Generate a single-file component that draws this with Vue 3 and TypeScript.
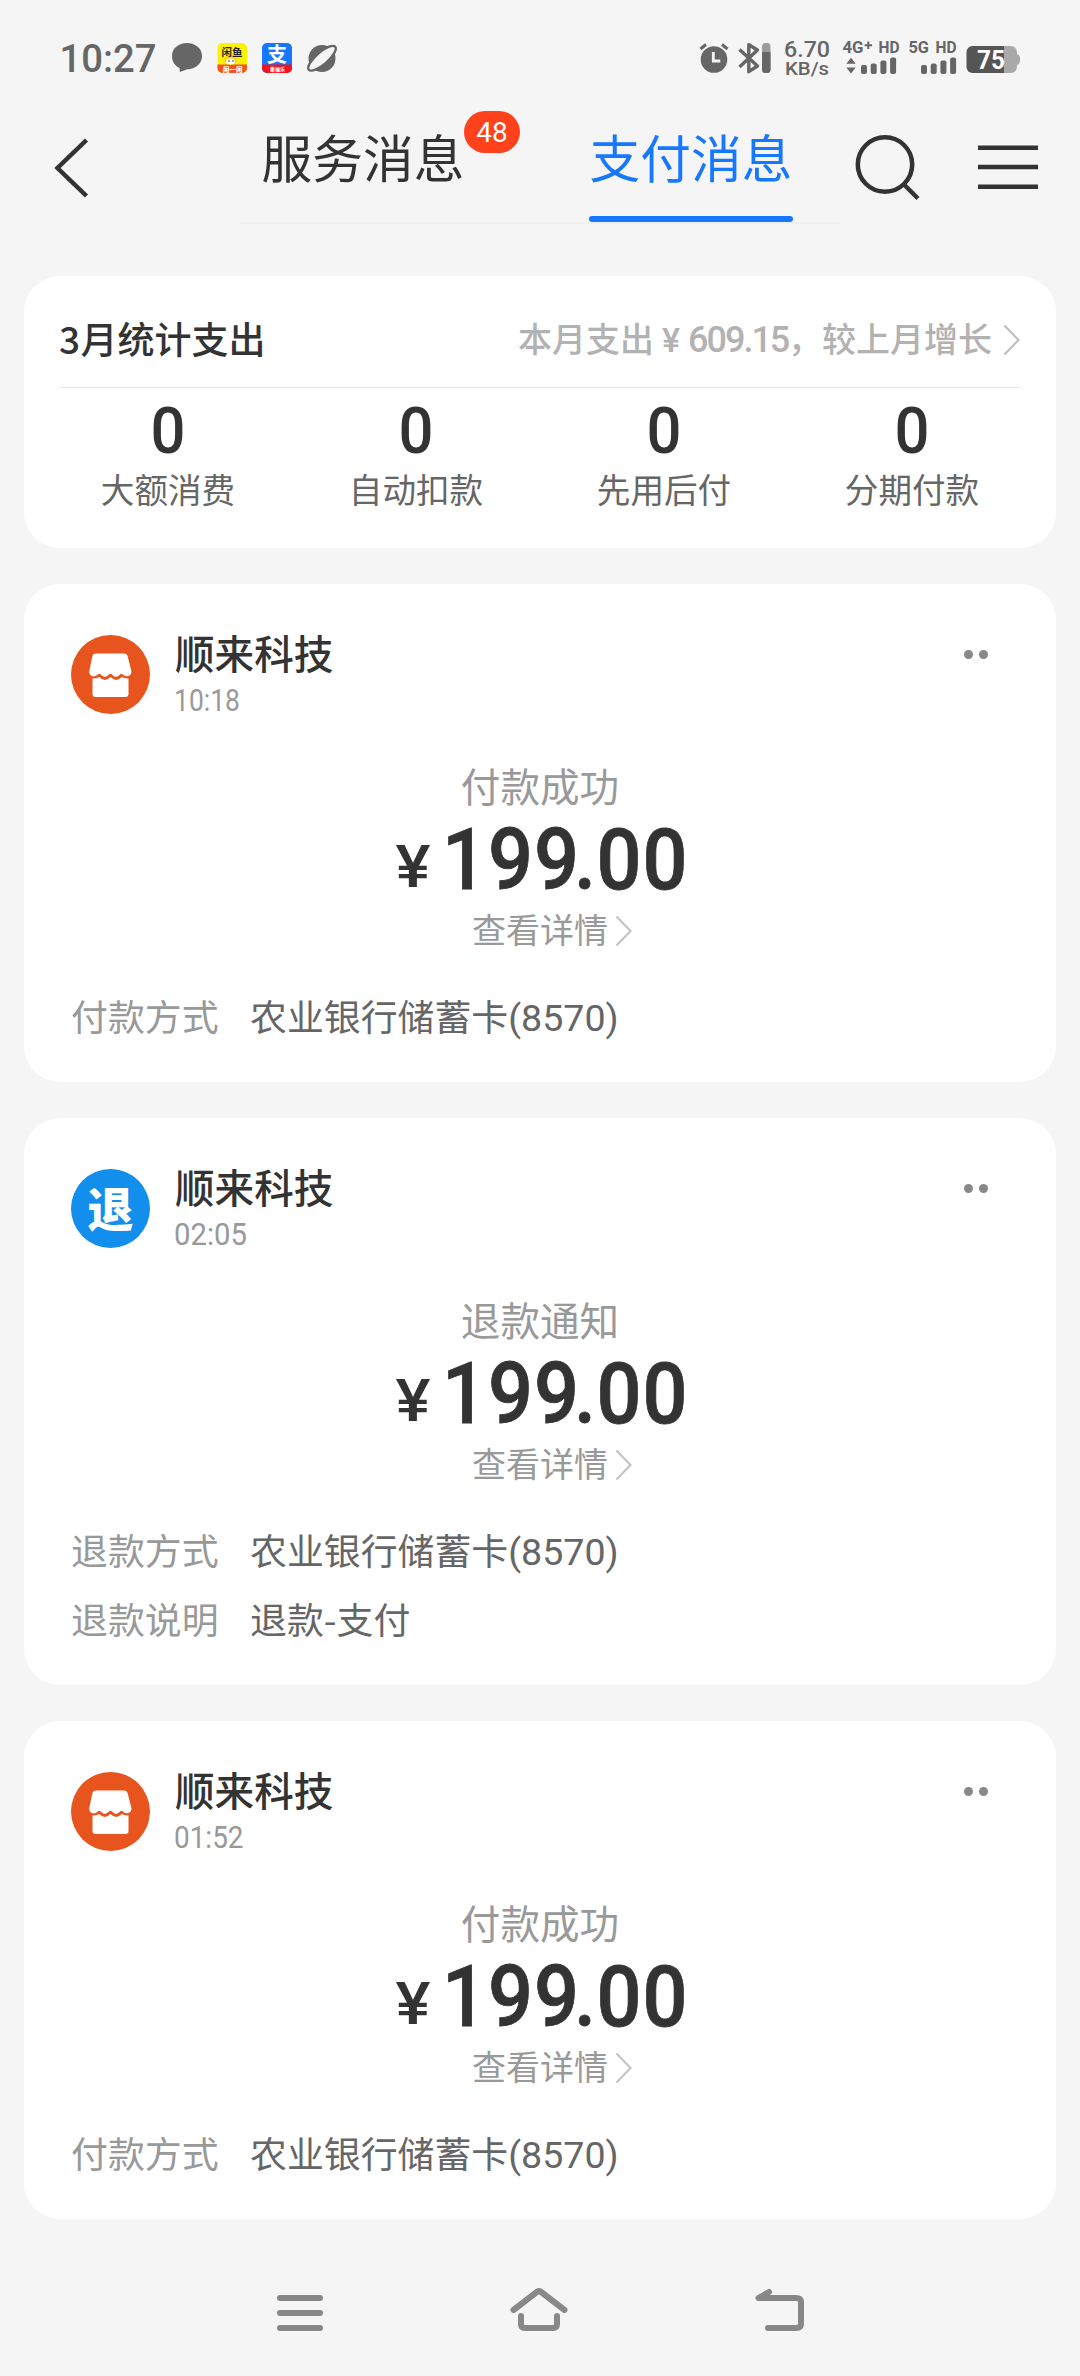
<script setup lang="ts">
interface Row {
  label: string
  value: string
  card?: string
}

interface Message {
  kind: 'pay' | 'refund'
  name: string
  time: string
  status: string
  rows: Row[]
}

const stats: string[] = ['大额消费', '自动扣款', '先用后付', '分期付款']

const messages: Message[] = [
  {
    kind: 'pay',
    name: '顺来科技',
    time: '10:18',
    status: '付款成功',
    rows: [{ label: '付款方式', value: '农业银行储蓄卡', card: '(8570)' }],
  },
  {
    kind: 'refund',
    name: '顺来科技',
    time: '02:05',
    status: '退款通知',
    rows: [
      { label: '退款方式', value: '农业银行储蓄卡', card: '(8570)' },
      { label: '退款说明', value: '退款-支付' },
    ],
  },
  {
    kind: 'pay',
    name: '顺来科技',
    time: '01:52',
    status: '付款成功',
    rows: [{ label: '付款方式', value: '农业银行储蓄卡', card: '(8570)' }],
  },
]

// The digit 1 is set narrower than the other figures.
const timeWidth = (time: string): number => 73 - 3.5 * (time.split('1').length - 1)
</script>

<template>
  <div class="screen">
    <div class="status-bar">
      <svg class="status-left" width="300" height="40" viewBox="40 38 300 40">
        <text x="59.5" y="71.5" class="clock" textLength="97" lengthAdjust="spacingAndGlyphs">10:27</text>
        <path d="M187 43c8.500 0 15 5.500 15 13s-6.500 13-14 13.200c-2 .1-4 1.600-8.200 2.800l-.2-4C175 66 172 61.500 172 56c0-7.500 6.500-13 15-13z" fill="#666" />
        <g>
          <rect x="217.500" y="43" width="29.500" height="30" rx="5" fill="#fdf100" />
          <path d="M217.500 64.500h29.500v3.500a5 5 0 0 1-5 5h-19.500a5 5 0 0 1-5-5z" fill="#f4511e" />
          <ellipse cx="230.500" cy="60" rx="6.500" ry="4.500" fill="#ffd21c" />
          <ellipse cx="230.500" cy="61.500" rx="4.500" ry="3" fill="#fff" />
          <circle cx="229" cy="61" r=".8" fill="#333" /><circle cx="233" cy="61" r=".8" fill="#333" />
          <text x="221.500" y="56" font-size="10.500" font-weight="700" fill="#222">闲鱼</text>
          <text x="223" y="71.500" font-size="6.500" font-weight="900" fill="#fff">闲一闲</text>
        </g>
        <g>
          <rect x="262" y="43" width="30" height="30" rx="5" fill="#1677ff" />
          <path d="M262 64.500h30v3.500a5 5 0 0 1-5 5h-20a5 5 0 0 1-5-5z" fill="#f0161e" />
          <text x="267" y="61.500" font-size="20" font-weight="700" fill="#fff">支</text>
          <text x="270" y="71" font-size="5" font-weight="700" fill="#fff">集福乐</text>
        </g>
        <g fill="none" stroke="#666">
          <circle cx="322" cy="58.500" r="13.500" fill="#666" stroke="none" />
          <ellipse cx="322" cy="58.300" rx="17.500" ry="6" transform="rotate(-41 322 58.300)" fill="#f5f5f5" stroke="#666" stroke-width="2.400" />
        </g>
      </svg>
      <svg class="status-right" width="330" height="40" viewBox="696 38 330 40">
        <g fill="#666">
          <circle cx="714" cy="59.500" r="13.300" />
          <path d="M700.500 49l5.500-4.500M727.500 49l-5.500-4.500" stroke="#666" stroke-width="3" />
          <path d="M713.300 52v9h7" fill="none" stroke="#f5f5f5" stroke-width="2.800" />
          <path d="M739.500 49.500l18 16.500-8.700 5.700V44.800l8.700 5.200-18 17" fill="none" stroke="#666" stroke-width="3.400" stroke-linejoin="round" />
          <rect x="762" y="43" width="8.500" height="30" rx="3.500" fill="#9b9b9b" />
          <path d="M762 52h8.500v17.500a3.500 3.500 0 0 1-3.500 3.500h-1.500a3.500 3.500 0 0 1-3.500-3.500z" />
          <text x="784" y="57" font-size="22.500" font-weight="500" textLength="46" lengthAdjust="spacingAndGlyphs" class="latin">6.70</text>
          <text x="785" y="75" font-size="19" font-weight="500" textLength="44" lengthAdjust="spacingAndGlyphs" class="latin">KB/s</text>
          <text x="842.500" y="53" font-size="16.500" font-weight="700" textLength="21" lengthAdjust="spacingAndGlyphs" class="latin">4G</text>
          <path d="M868.300 41.500v7.500M864.600 45.200h7.500" stroke="#666" stroke-width="2" />
          <text x="878.500" y="53" font-size="16.500" font-weight="700" textLength="21" lengthAdjust="spacingAndGlyphs" class="latin">HD</text>
          <path d="M851 57.700l4.700 6h-9.400zM851 73.600l4.700-6h-9.400z" />
          <g v-for="x in [861, 921]" :key="x">
            <rect :x="x" y="65" width="6" height="9" rx="2" />
            <rect :x="x + 9.700" y="63.500" width="6" height="10.500" rx="2" />
            <rect :x="x + 19.400" y="60.500" width="6" height="13.500" rx="2" />
            <rect :x="x + 29.100" y="57.500" width="6" height="16.500" rx="2" />
          </g>
          <text x="908.500" y="53" font-size="16.500" font-weight="700" textLength="20.500" lengthAdjust="spacingAndGlyphs" class="latin">5G</text>
          <text x="935.500" y="53" font-size="16.500" font-weight="700" textLength="21" lengthAdjust="spacingAndGlyphs" class="latin">HD</text>
          <path d="M1004 46h7a6 6 0 0 1 6 6v2a4 4 0 0 1 3 3.500v4a4 4 0 0 1-3 3.500v2a6 6 0 0 1-6 6h-7z" fill="#a9a9a9" />
          <path d="M972.500 46H1004v27h-31.500a6 6 0 0 1-6-6V52a6 6 0 0 1 6-6z" fill="#555" />
          <text x="977" y="68.800" font-size="25" font-weight="700" textLength="28" lengthAdjust="spacingAndGlyphs" class="latin" fill="#fff">75</text>
        </g>
      </svg>
    </div>

    <header class="header">
      <svg class="back" width="40" height="64" viewBox="52 136 40 64">
        <path d="M86.500 140L57.500 168l29 28" fill="none" stroke="#333" stroke-width="4.500" />
      </svg>
      <nav class="tabs">
        <div class="tab">服务消息<span class="badge">48</span></div>
        <div class="tab active">支付消息</div>
      </nav>
      <svg class="tools" width="190" height="70" viewBox="852 130 190 70" fill="none" stroke="#333">
        <circle cx="885" cy="164.500" r="27.200" stroke-width="4.500" />
        <path d="M903.500 184l14.500 14.500" stroke-width="4.500" />
        <path d="M978 147.700h60M978 167h60M978 186.700h60" stroke-width="4.500" />
      </svg>
    </header>

    <main class="list">
      <section class="card summary">
        <div class="summary-head">
          <h2><span class="three">3</span>月统计支出</h2>
          <div class="compare">
            本月支出<span class="yen">¥</span><span class="sum">609.15</span>，较上月增长
            <svg width="18" height="32" viewBox="0 0 18 32"><path d="M1.500 1.500L15.500 16l-14 14.500" fill="none" stroke="#c0c0c0" stroke-width="2.200" /></svg>
          </div>
        </div>
        <div class="stats">
          <div v-for="label in stats" :key="label" class="stat">
            <svg width="60" height="60" viewBox="0 0 60 60"><text x="12.500" y="52.500" class="zero" textLength="35" lengthAdjust="spacingAndGlyphs">0</text></svg>
            <span>{{ label }}</span>
          </div>
        </div>
      </section>

      <section v-for="(m, i) in messages" :key="i" class="card message">
        <div class="head">
          <div v-if="m.kind === 'pay'" class="avatar pay">
            <svg width="79" height="79" viewBox="0 0 79 79" fill="#fff">
              <path d="M25 18.500h28q3 0 3.700 3l3.700 14.500c.5 3-1.900 5.300-5 5.300-2.300 0-3-2.300-5-2.300s-2.700 2.800-5.500 2.800-3-2.800-5.400-2.800-3 2.800-5.700 2.800-3.200-2.800-5.500-2.800-2.700 2.300-5 2.300c-3.500 0-5.500-2.300-5-5.300L21.300 21.500q.7-3 3.700-3z" />
              <path d="M21.500 43.500q4.500 0 6.700-1.500 3 3 5.600 3t5.700-3q3 3 5.700 3t5.500-3q3 1.500 6.800 1.500V59q0 3-3 3h-30q-3 0-3-3z" />
            </svg>
          </div>
          <div v-else class="avatar refund">退</div>
          <div class="who">
            <div class="name">{{ m.name }}</div>
            <svg class="time" width="90" height="36" viewBox="0 0 90 36"><text x="-1" y="29" :textLength="timeWidth(m.time)" lengthAdjust="spacingAndGlyphs">{{ m.time }}</text></svg>
          </div>
          <div class="more"><i></i><i></i></div>
        </div>
        <div class="state">{{ m.status }}</div>
        <svg class="amount" width="300" height="76" viewBox="390 235 300 76">
          <text x="395.500" y="303.300" font-size="60" textLength="35" lengthAdjust="spacingAndGlyphs" class="amount-yen">¥</text>
          <text transform="translate(442 305) scale(.92 1)" x="0 50 100 143.500 168 218" y="0" font-size="86" class="amount-num">199.00</text>
        </svg>
        <div class="detail">
          查看详情
          <svg width="18" height="32" viewBox="0 0 18 32"><path d="M1.500 1.500L15.500 16l-14 14.500" fill="none" stroke="#c4c4c4" stroke-width="2.200" /></svg>
        </div>
        <dl class="rows">
          <div v-for="row in m.rows" :key="row.label" class="row">
            <dt>{{ row.label }}</dt>
            <dd>{{ row.value }}<span v-if="row.card" class="digits">{{ row.card }}</span></dd>
          </div>
        </dl>
      </section>
    </main>

    <footer class="nav">
      <svg width="46" height="44" viewBox="277 2289 46 44"><path d="M280 2298h40M280 2313h40M280 2328h40" /></svg>
      <svg width="60" height="44" viewBox="510 2289 60 44"><path d="M514.500 2310l24-18.500q1.500-1 3 0l24 18.500M522 2316v8q0 4 4 4h28q4 0 4-4v-8" /></svg>
      <svg width="50" height="44" viewBox="755 2289 50 44"><path d="M769 2292l-10.500 6H796q5 0 5 4v22q0 4-5 4h-28" /></svg>
    </footer>
  </div>
</template>

<style>
body {
  margin: 0;
  background: #f5f5f5;
}
</style>

<style scoped>
.screen {
  width: 1080px;
  height: 2376px;
  overflow: hidden;
  background: #f5f5f5;
  color: #333;
  font-family: 'Noto Sans CJK SC', sans-serif;
  display: flex;
  flex-direction: column;
}
svg {
  display: block;
  flex: none;
  overflow: visible;
}
.latin {
  font-family: Roboto, sans-serif;
}
.status-bar {
  height: 62px;
  padding: 38px 54px 0 40px;
  display: flex;
  justify-content: space-between;
}
.clock {
  font: 500 39.5px Roboto, sans-serif;
  fill: #666;
}
.header {
  height: 176px;
  display: flex;
}
.back {
  margin: 36px 148px 0 52px;
}
.tabs {
  width: 579px;
  height: 122px;
  border-bottom: 2px solid #efefef;
  display: flex;
  gap: 124px;
  padding-left: 21px;
}
.tab {
  position: relative;
  width: 204px;
  height: 122px;
  font-size: 50.7px;
  line-height: 112px;
  text-align: center;
  white-space: nowrap;
}
.tab.active {
  color: #1677ff;
}
.tab.active::after {
  content: '';
  position: absolute;
  left: 0;
  bottom: 0;
  width: 204px;
  height: 6px;
  border-radius: 3px;
  background: #1677ff;
}
.badge {
  position: absolute;
  left: 203px;
  top: 11px;
  width: 56px;
  height: 42px;
  border-radius: 21px;
  background: #ff411c;
  color: #fff;
  font: 400 28px/43px Roboto, sans-serif;
}
.tools {
  margin: 30px 0 0 12px;
}
.list {
  display: flex;
  flex-direction: column;
  gap: 36px;
  padding: 0 24px;
}
.card {
  background: #fff;
  border-radius: 36px;
}
.summary {
  height: 272px;
}
.summary-head {
  height: 111px;
  margin: 0 35px;
  border-bottom: 1px solid #e6e6e6;
  display: flex;
  justify-content: space-between;
}
h2 {
  margin: 0;
  font-size: 37px;
  font-weight: 500;
  line-height: 124px;
}
.three {
  display: inline-block;
  width: 21.5px;
}
.compare {
  display: flex;
  height: 111px;
  color: #b2b2b2;
  font-size: 34px;
  font-weight: 500;
  line-height: 124px;
  white-space: nowrap;
}
.compare svg {
  margin: 48px 0 0 11px;
}
.yen,
.sum {
  font-family: Roboto, sans-serif;
  font-size: 36px;
  line-height: 128px;
}
.yen {
  width: 34px;
  text-align: center;
  font-size: 34px;
}
.sum {
  width: 100px;
  letter-spacing: -2px;
}
.stats {
  display: flex;
  padding-left: 20px;
}
.stat {
  width: 248px;
  display: flex;
  flex-direction: column;
  align-items: center;
}
.stat svg {
  margin-top: 12px;
}
.zero {
  font: 500 65px Roboto, sans-serif;
  fill: #333;
}
.stat span {
  margin-top: 9px;
  font-size: 33.6px;
  line-height: 40px;
  color: #666;
}
.message {
  padding: 44px 47px 43px;
}
.head {
  display: flex;
  height: 90px;
}
.avatar {
  width: 79px;
  height: 79px;
  margin: 7px 25px 0 0;
  border-radius: 50%;
}
.pay {
  background: #e8541e;
}
.refund {
  background: #128fec;
  color: #fff;
  font-size: 46px;
  font-weight: 900;
  line-height: 75px;
  text-align: center;
}
.who {
  flex: 1;
}
.name {
  font-size: 39.6px;
  font-weight: 500;
  line-height: 48px;
}
.time {
  margin-top: 6px;
}
.time text {
  font: 400 31px Roboto, sans-serif;
  fill: #999;
}
.more {
  display: flex;
  gap: 6px;
  padding: 22px 21px 0 0;
}
.more i {
  width: 9px;
  height: 9px;
  border-radius: 50%;
  background: #888;
}
.state {
  margin-top: 43px;
  font-size: 39.6px;
  line-height: 48px;
  text-align: center;
  color: #999;
}
.amount {
  margin: 10px auto 0;
}
.amount text {
  fill: #333;
}
.amount-yen {
  font-family: Roboto, sans-serif;
  font-weight: 500;
}
.amount-num {
  font-family: Roboto, sans-serif;
  font-weight: 500;
  stroke: #333;
  stroke-width: 0.8px;
}
.detail {
  display: flex;
  justify-content: center;
  height: 40px;
  margin: 14px 0 0 25px;
  font-size: 34px;
  line-height: 40px;
  color: #999;
}
.detail svg {
  margin: 6px 0 0 7px;
}
.rows {
  display: flex;
  flex-direction: column;
  gap: 21px;
  margin: 42px 0 0;
}
.row {
  display: flex;
  height: 48px;
  font-size: 36.9px;
  line-height: 48px;
}
dt {
  width: 179px;
  color: #999;
}
dd {
  margin: 0;
  color: #666;
}
.digits {
  font-family: Roboto, sans-serif;
  font-size: 37.6px;
}
.nav {
  display: flex;
  padding: 70px 275px 0 277px;
  justify-content: space-between;
}
.nav path {
  fill: none;
  stroke: #888;
  stroke-width: 6;
  stroke-linecap: round;
  stroke-linejoin: round;
}
</style>
